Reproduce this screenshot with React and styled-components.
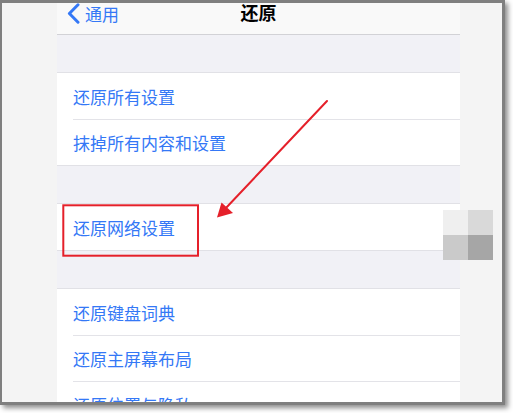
import React from 'react';
import styled, { createGlobalStyle } from 'styled-components';

const BLUE = '#3478f6';
const RED = '#e5202a';

const GlobalStyle = createGlobalStyle`
    html, body {
        margin: 0;
        padding: 0;
        background: #ffffff;
    }

    body {
        font-family: "Noto Sans CJK SC", "Noto Sans", sans-serif;
    }
`;

const Page = styled.div`
    position: relative;
    width: 513px;
    height: 413px;
    overflow: hidden;
`;

const Frame = styled.div`
    box-sizing: border-box;
    width: 505px;
    height: 405px;

    border-style: solid;
    border-color: #7f7f7f;
    border-width: 3px 3px 3px 2px;
    box-shadow: 3px 3px 5px rgba(0, 0, 0, 0.45);

    background-color: #f4f4f4;

    display: flex;
    overflow: hidden;
`;

const Gutter = styled.div`
    width: 55px;
    flex-shrink: 0;
`;

const Screen = styled.div`
    width: 403px;
    flex-shrink: 0;

    background-color: #f1f1f6;

    display: flex;
    flex-direction: column;
`;

const NavBar = styled.div`
    box-sizing: border-box;
    height: 32px;
    flex-shrink: 0;

    background-color: #f9f9f9;
    border-bottom: 1px solid #d2d2d6;

    display: grid;
    grid-template-columns: 1fr auto 1fr;
    align-items: start;
`;

const BackButton = styled.div`
    padding-left: 10px;

    display: flex;
    align-items: center;
    gap: 5px;

    color: ${BLUE};
    font-size: 17px;
    line-height: 18px;
`;

const NavTitle = styled.div`
    color: #000;
    font-size: 18px;
    font-weight: 600;
    line-height: 19px;
`;

const SectionGap = styled.div`
    height: 37px;
    flex-shrink: 0;
`;

const Group = styled.div`
    flex-shrink: 0;

    background-color: #fff;
    border-top: 1px solid #e1e1e6;
    border-bottom: 1px solid #e1e1e6;
`;

const Row = styled.div`
    height: 46px;
    padding-left: 16px;

    display: flex;
    align-items: stretch;

    color: ${BLUE};
    font-size: 17px;
`;

const RowLabel = styled.span`
    flex: 1;
    box-sizing: border-box;

    display: flex;
    align-items: center;

    border-top: ${(props) => (props.$divider ? '1px solid #e3e3e8' : 'none')};
`;

const Annotations = styled.svg`
    position: absolute;
    top: 0;
    left: 0;
    pointer-events: none;
`;

const Mosaic = styled.div`
    position: absolute;
    left: 443px;
    top: 210px;

    display: grid;
    grid-template-columns: 25px 25px;
    grid-template-rows: 25px 25px;
`;

const Tile = styled.div`
    background-color: ${(props) => props.$tone};
`;

const groups = [
    ['还原所有设置', '抹掉所有内容和设置'],
    ['还原网络设置'],
    ['还原键盘词典', '还原主屏幕布局', '还原位置与隐私'],
];

function App() {
    return (
        <Page>
            <GlobalStyle />
            <Frame>
                <Gutter />
                <Screen>
                    <NavBar>
                        <BackButton>
                            <svg width="13" height="21" viewBox="0 0 13 21">
                                <path
                                    d="M11 1.8 L2.4 10.5 L11 19.2"
                                    fill="none"
                                    stroke={BLUE}
                                    strokeWidth="3"
                                    strokeLinecap="round"
                                    strokeLinejoin="round"
                                />
                            </svg>
                            通用
                        </BackButton>
                        <NavTitle>还原</NavTitle>
                        <div />
                    </NavBar>
                    {groups.map((items, gi) => (
                        <React.Fragment key={gi}>
                            <SectionGap />
                            <Group>
                                {items.map((label, i) => (
                                    <Row key={label}>
                                        <RowLabel $divider={i > 0}>{label}</RowLabel>
                                    </Row>
                                ))}
                            </Group>
                        </React.Fragment>
                    ))}
                </Screen>
            </Frame>

            <Mosaic>
                <Tile $tone="#efefef" />
                <Tile $tone="#d9d9d9" />
                <Tile $tone="#cacaca" />
                <Tile $tone="#a6a6a6" />
            </Mosaic>

            <Annotations width="513" height="413" viewBox="0 0 513 413">
                <rect x="63.3" y="205.3" width="134.7" height="50.4" fill="none" stroke={RED} strokeWidth="2" />
                <line x1="327" y1="101" x2="225" y2="209" stroke={RED} strokeWidth="2" strokeLinecap="round" />
                <polygon points="217,217.5 221.5,202.5 233,213" fill={RED} />
            </Annotations>
        </Page>
    );
}

export default App;
